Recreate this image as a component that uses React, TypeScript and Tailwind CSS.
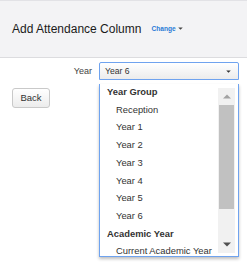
import React from "react";

const yearGroups = ["Reception", "Year 1", "Year 2", "Year 3", "Year 4", "Year 5", "Year 6"];

function App() {
  return (
    <div className="w-[247px] h-[278px] bg-white overflow-hidden font-['Liberation_Sans',Arial,sans-serif] text-[#333]">
      <div className="h-[58px] bg-[#f3f3f5] border-t border-[#e2e2e6] border-b border-b-[#dcdcdf] flex items-center pl-[12px]">
        <span className="text-[12px] text-[#1a1a1a]">Add Attendance Column</span>
        <span className="ml-[10px] text-[6.6px] font-bold text-[#2a7bd6] flex items-center">
          Change
          <svg width="5" height="3" viewBox="0 0 6 4" className="ml-[2px]">
            <path d="M0 0.5h6L3 3.5z" fill="#444" />
          </svg>
        </span>
      </div>

      <div className="relative">
        <div className="flex items-center mt-[4px] h-[18px]">
          <span className="w-[99px] text-right pr-[7px] text-[9px] text-[#444] leading-none">Year</span>
          <div className="w-[140px] h-[18px] border border-[#6fa3ef] rounded-t-[2px] bg-gradient-to-b from-white to-[#ececec] flex items-center justify-between pl-[5px] pr-[7px] text-[8.6px] text-[#333] leading-none">
            <span>Year 6</span>
            <svg width="5" height="3" viewBox="0 0 6 4">
              <path d="M0 0.5h6L3 3.5z" fill="#333" />
            </svg>
          </div>
        </div>

        <div className="mt-[8px] ml-[12px] flex">
          <button className="w-[38px] h-[20px] border border-[#c9c9c9] rounded-[3px] bg-gradient-to-b from-white to-[#ececec] text-[9.5px] text-[#333] leading-none">
            Back
          </button>
        </div>

        <div className="absolute left-[99px] top-[22px] w-[140px] h-[173px] border border-[#6fa3ef] border-t-0 bg-white shadow-[0_2px_3px_rgba(0,0,0,0.25)] flex overflow-hidden">
          <div className="flex-1 h-[170px] overflow-hidden">
            <div className="-mt-[1px] text-[9.4px] leading-[17.7px] text-[#333]">
              <div className="pl-[7px] font-bold">Year Group</div>
              {yearGroups.map((y) => (
                <div key={y} className="pl-[16px]">{y}</div>
              ))}
              <div className="pl-[7px] font-bold">Academic Year</div>
              <div className="pl-[16px] whitespace-nowrap">Current Academic Year</div>
            </div>
          </div>
          <div className="w-[17px] mr-[3px] mt-[4px] mb-[3px] bg-[#f1f1f1] flex flex-col items-center">
            <div className="h-[17px] flex items-center justify-center">
              <svg width="8" height="5" viewBox="0 0 8 5">
                <path d="M0 4.5h8L4 0.5z" fill="#a3a3a3" />
              </svg>
            </div>
            <div className="w-[15px] h-[104px] bg-[#c1c1c1]" />
            <div className="flex-1" />
            <div className="h-[17px] flex items-center justify-center">
              <svg width="8" height="5" viewBox="0 0 8 5">
                <path d="M0 0.5h8L4 4.5z" fill="#505050" />
              </svg>
            </div>
          </div>
        </div>
      </div>
    </div>
  );
}

export default App;
